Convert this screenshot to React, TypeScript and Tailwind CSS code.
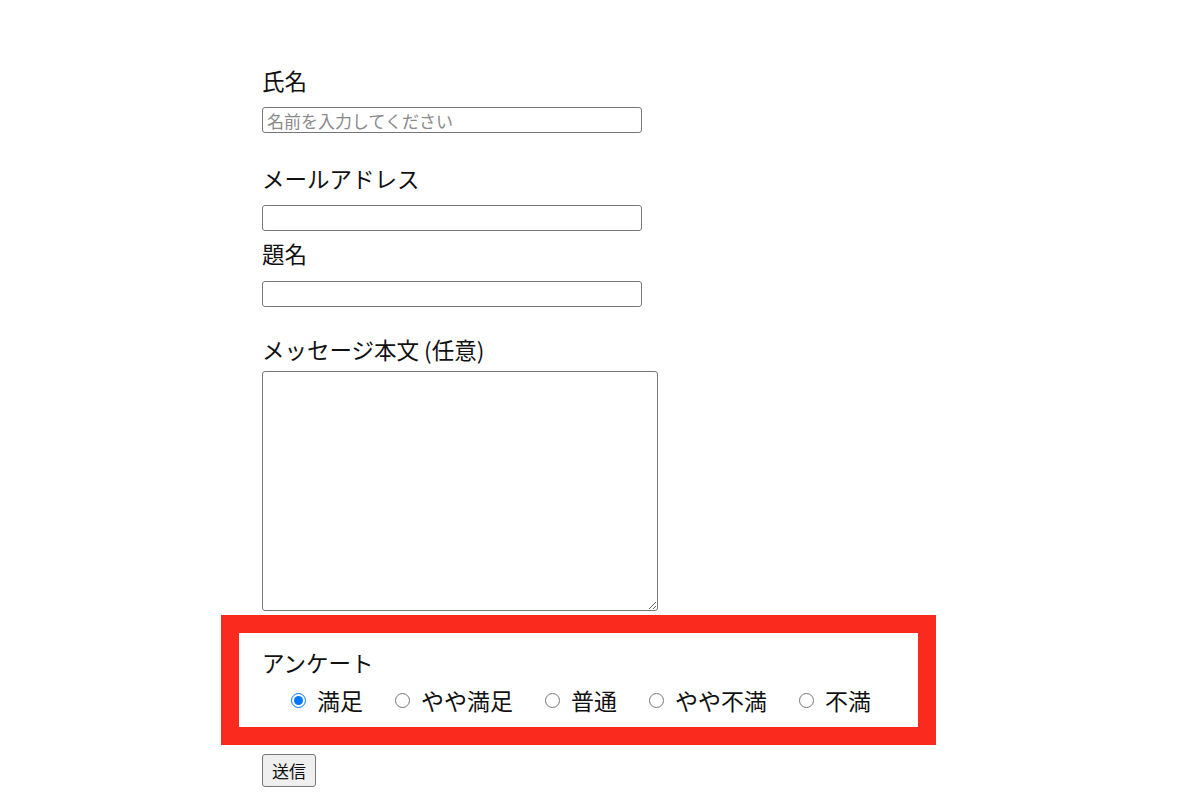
import React from "react";

const options = ["満足", "やや満足", "普通", "やや不満", "不満"];

const App = () => {
  return (
    <div className="min-h-[806px] bg-white text-[#111] font-['Noto_Sans_CJK_JP','Noto_Sans',sans-serif]">
      <form className="flex flex-col items-start pt-[64px] pl-[262px]">
        <label className="block text-[22.5px] leading-[32px]">氏名</label>
        <input
          type="text"
          placeholder="名前を入力してください"
          className="mt-[11px] w-[380px] h-[26px] px-[4px] text-[17px] border border-[#767676] rounded-[3px] placeholder:text-[#8a8a8a] outline-none"
        />

        <label className="block mt-[29px] text-[22.5px] leading-[32px]">メールアドレス</label>
        <input
          type="email"
          className="mt-[11px] w-[380px] h-[26px] px-[4px] text-[17px] border border-[#767676] rounded-[3px] outline-none"
        />

        <label className="block mt-[6px] text-[22.5px] leading-[32px]">題名</label>
        <input
          type="text"
          className="mt-[12px] w-[380px] h-[26px] px-[4px] text-[17px] border border-[#767676] rounded-[3px] outline-none"
        />

        <label className="block mt-[26px] text-[22.5px] leading-[32px]">メッセージ本文 (任意)</label>
        <textarea className="mt-[6px] w-[396px] h-[240px] p-[4px] text-[17px] border border-[#767676] rounded-[3px] outline-none" />

        <fieldset className="mt-[4px] -ml-[41px] w-[715px] h-[130px] border-[18px] border-[#fb2a1f] px-[23px] pt-[13px]">
          <div className="text-[22.5px] leading-[32px]">アンケート</div>
          <div className="flex items-center gap-[32px] mt-[6px] pl-[29px] text-[23px] leading-[32px] whitespace-nowrap">
            {options.map((o, i) => (
              <label key={o} className="flex shrink-0 items-center">
                <input
                  type="radio"
                  name="survey"
                  defaultChecked={i === 0}
                  className="m-0 w-[15px] h-[15px]"
                />
                <span className="ml-[11px]">{o}</span>
              </label>
            ))}
          </div>
        </fieldset>

        <button
          type="button"
          className="mt-[9px] w-[54px] h-[33px] text-[17px] bg-[#efefef] border border-[#767676] rounded-[3px] text-[#111]"
        >
          送信
        </button>
      </form>
    </div>
  );
};

export default App;
